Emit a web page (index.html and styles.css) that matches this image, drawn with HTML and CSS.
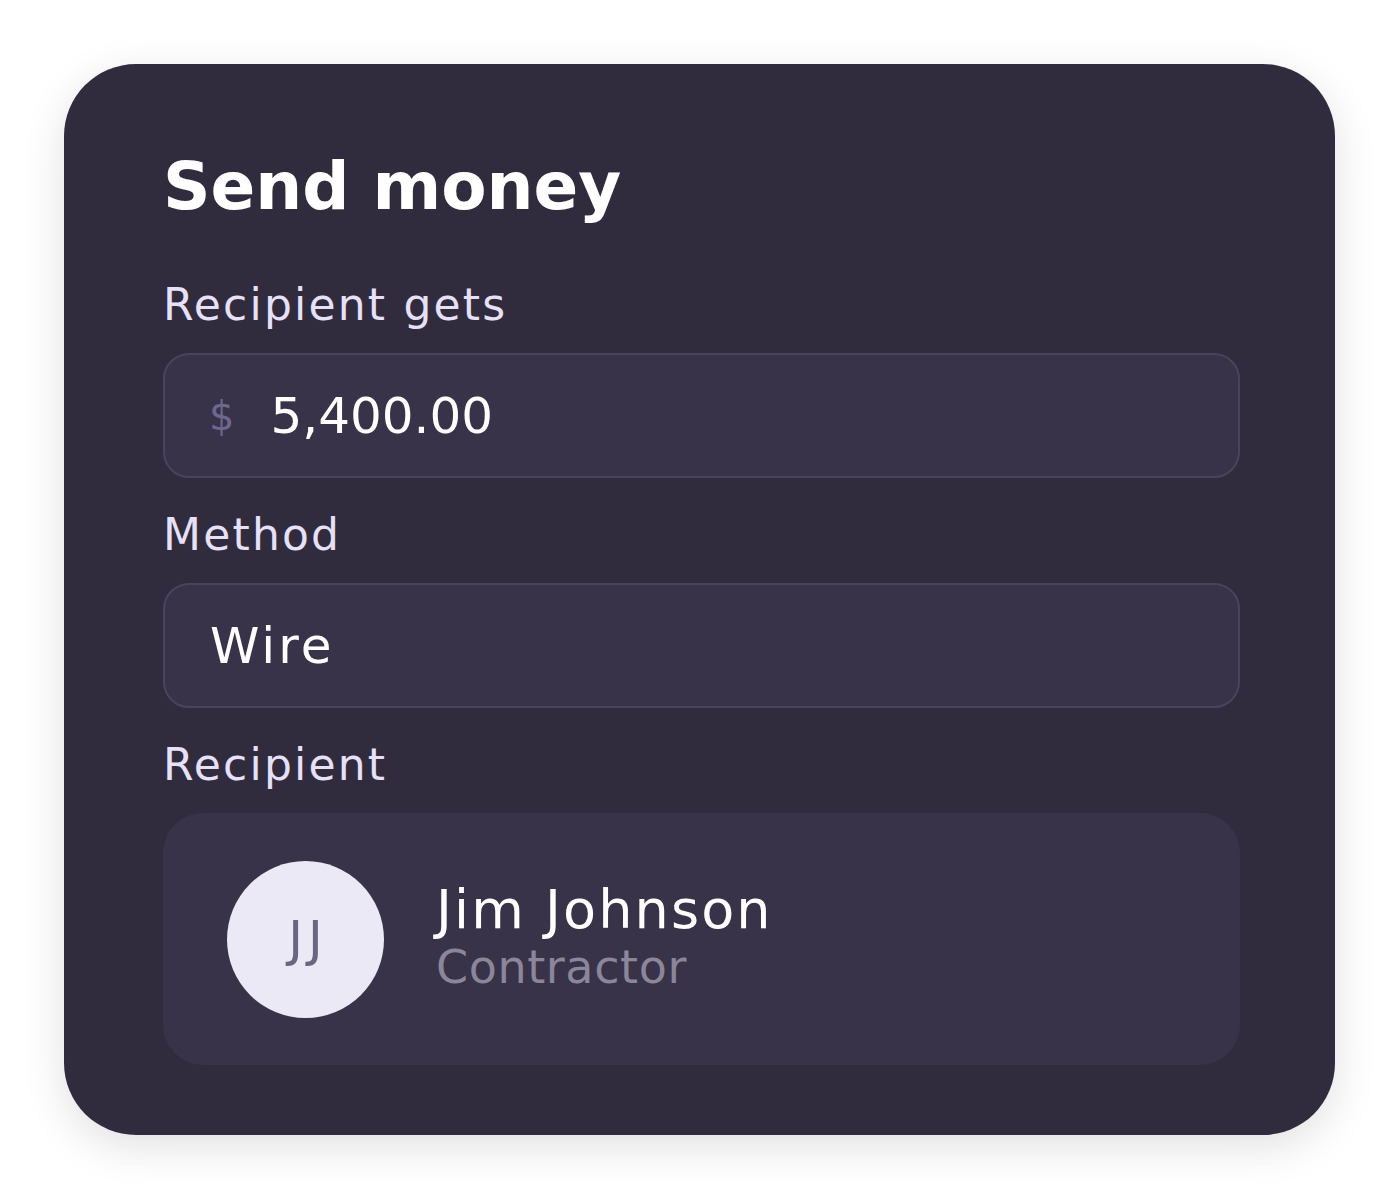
FILE: index.html
```html
<!DOCTYPE html>
<html lang="en">
<head>
    <meta charset="UTF-8">
    <meta name="viewport" content="width=device-width, initial-scale=1.0">
    <title>Send money</title>
    <link rel="stylesheet" href="styles.css">
</head>
<body>
    <div class="send-card">
        <h1 class="title">Send money</h1>

        <div class="field">
            <label class="label">Recipient gets</label>
            <div class="input">
                <span class="currency">$</span>
                <span class="value">5,400.00</span>
            </div>
        </div>

        <div class="field">
            <label class="label">Method</label>
            <div class="input">
                <span class="value wire">Wire</span>
            </div>
        </div>

        <div class="field last">
            <label class="label">Recipient</label>
            <div class="recipient">
                <div class="avatar">JJ</div>
                <div class="person">
                    <div class="name">Jim Johnson</div>
                    <div class="role">Contractor</div>
                </div>
            </div>
        </div>
    </div>
</body>
</html>
```

FILE: styles.css
```css
body {
    margin: 0;
    background-color: #fff;
    font-family: "DejaVu Sans", "Noto Sans", sans-serif;
}

.send-card {
    margin: 64px;
    width: 1271px;
    height: 1071px;
    box-sizing: border-box;
    padding: 83px 95px 0 99px;
    background-color: #302c3e;
    border-radius: 72px;
    box-shadow: 0 12px 44px rgba(0, 0, 0, 0.12);
}

.title {
    margin: 0 0 53px 0;
    font-size: 66px;
    line-height: 80px;
    font-weight: 700;
    color: #fff;
}

.field {
    margin-bottom: 32px;
}

.field.last {
    margin-bottom: 0;
}

.label {
    display: block;
    margin-bottom: 23px;
    font-size: 44px;
    line-height: 50px;
    letter-spacing: 2.2px;
    color: #e6e0f8;
}

.input {
    display: flex;
    align-items: center;
    height: 125px;
    box-sizing: border-box;
    padding-left: 44px;
    background-color: #383348;
    border: 2px solid #49445d;
    border-radius: 26px;
}

.currency {
    font-size: 40px;
    color: #6e6890;
    margin-right: 36px;
}

.value {
    font-size: 50px;
    color: #fff;
}

.value.wire {
    letter-spacing: 3px;
    margin-left: 1px;
}

.recipient {
    display: flex;
    align-items: center;
    height: 252px;
    padding-left: 64px;
    background-color: #383348;
    border-radius: 40px;
}

.avatar {
    width: 157px;
    height: 157px;
    box-sizing: border-box;
    padding-left: 5px;
    border-radius: 50%;
    background-color: #ece9f6;
    display: flex;
    align-items: center;
    justify-content: center;
    font-size: 50px;
    letter-spacing: 5px;
    color: #6b6680;
}

.person {
    margin-left: 52px;
}

.name {
    font-size: 54px;
    line-height: 56px;
    letter-spacing: 2.1px;
    color: #fff;
}

.role {
    font-size: 46px;
    line-height: 58px;
    letter-spacing: 0.6px;
    color: #8b8699;
}
```
